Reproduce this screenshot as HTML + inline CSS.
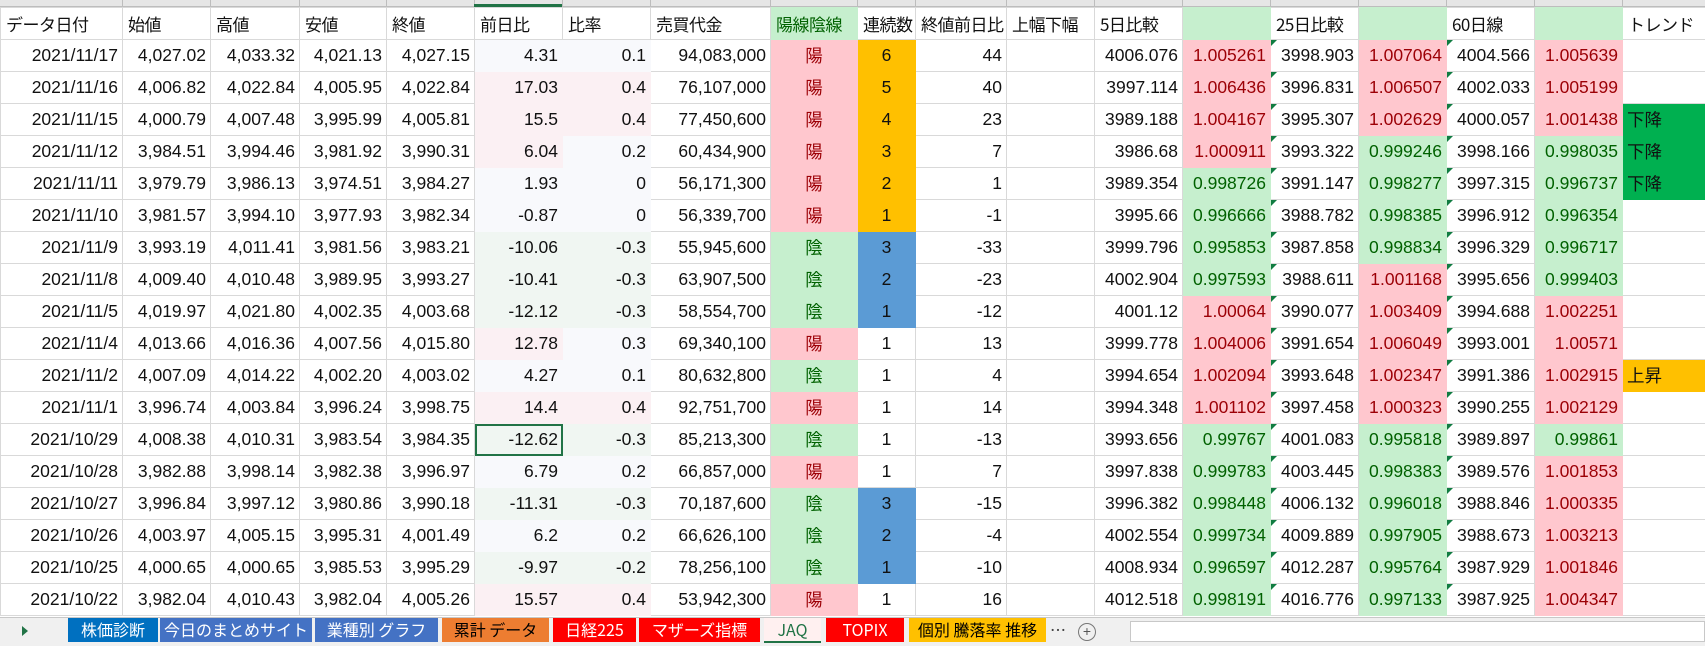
<!DOCTYPE html>
<html><head><meta charset="utf-8">
<style>
body{margin:0;width:1705px;height:645px;overflow:hidden;background:#fff;font-family:"Liberation Sans","Noto Sans CJK JP",sans-serif;position:relative}
.band{position:absolute;left:0;top:0;width:1705px;height:7px;background:#e6e6e6;border-bottom:1px solid #bdbdbd;box-sizing:border-box}
.band i{position:absolute;top:0;width:1px;height:7px;background:#bdbdbd}
table{position:absolute;left:0;top:7px;border-collapse:collapse;table-layout:fixed;width:1705px}
td{height:31px;border:1px solid #d9d9d9;font-size:17.5px;padding:0 4px;text-align:right;white-space:nowrap;overflow:hidden;position:relative;color:#111}
tr.h td{text-align:left;padding-left:5px;font-family:"Noto Sans CJK JP","Liberation Sans",sans-serif;font-size:17px;letter-spacing:-0.5px}
.c{text-align:center}
.p{background:#ffc7ce;color:#9c0006;border-color:#ffc7ce}
.g{background:#c6efce;color:#006100;border-color:#c6efce}
.o{background:#ffc000;text-align:center;border-color:#ffc000}
.b{background:#5b9bd5;text-align:center;border-color:#5b9bd5}
.pp{background:#fbf0f3;border-color:#fbf0f3}
.pg{background:#f0f6f2;border-color:#f0f6f2}
.pw{background:#f8f9fc;border-color:#f8f9fc}
.dn{background:#00b050;text-align:left;font-family:"Noto Sans CJK JP",sans-serif;border-color:#00b050}
.up{background:#ffc000;text-align:left;font-family:"Noto Sans CJK JP",sans-serif;border-color:#ffc000}
.t::before{content:"";position:absolute;left:0;top:0;border-top:6px solid #107c41;border-right:6px solid transparent}
.sel{outline:2px solid #217346;outline-offset:-2px}
.jp{font-family:"Noto Sans CJK JP",sans-serif}
.tabs{position:absolute;left:0;top:617px;width:1705px;height:28px;background:#f0f0f0;border-top:1px solid #c8c8c8}
.tab{position:absolute;top:0;height:24px;font-family:"Noto Sans CJK JP","Liberation Sans",sans-serif;font-size:16px;line-height:23px;text-align:center;color:#fff;overflow:hidden;white-space:nowrap}
</style></head><body>
<div class="band"><i style="left:122px"></i><i style="left:210px"></i><i style="left:299px"></i><i style="left:386px"></i><i style="left:474px"></i><i style="left:562px"></i><i style="left:650px"></i><i style="left:770px"></i><i style="left:857px"></i><i style="left:915px"></i><i style="left:1006px"></i><i style="left:1094px"></i><i style="left:1182px"></i><i style="left:1270px"></i><i style="left:1358px"></i><i style="left:1446px"></i><i style="left:1534px"></i><i style="left:1622px"></i><div style="position:absolute;left:474px;top:4px;width:88px;height:3px;background:#217346"></div></div>
<table>
<colgroup><col style="width:122px"><col style="width:88px"><col style="width:89px"><col style="width:87px"><col style="width:88px"><col style="width:88px"><col style="width:88px"><col style="width:120px"><col style="width:87px"><col style="width:58px"><col style="width:91px"><col style="width:88px"><col style="width:88px"><col style="width:88px"><col style="width:88px"><col style="width:88px"><col style="width:88px"><col style="width:88px"><col style="width:83px"></colgroup>
<tr class="h"><td>データ日付</td><td>始値</td><td>高値</td><td>安値</td><td>終値</td><td>前日比</td><td>比率</td><td>売買代金</td><td class="g">陽線陰線</td><td>連続数</td><td>終値前日比</td><td>上幅下幅</td><td>5日比較</td><td class="g"></td><td>25日比較</td><td class="g"></td><td>60日線</td><td class="g"></td><td>トレンド</td></tr>
<tr><td>2021/11/17</td><td>4,027.02</td><td>4,033.32</td><td>4,021.13</td><td>4,027.15</td><td class="pw">4.31</td><td class="pw">0.1</td><td>94,083,000</td><td class="p c jp">陽</td><td class="o">6</td><td>44</td><td></td><td>4006.076</td><td class="p">1.005261</td><td class="t">3998.903</td><td class="p">1.007064</td><td class="t">4004.566</td><td class="p">1.005639</td><td></td></tr>
<tr><td>2021/11/16</td><td>4,006.82</td><td>4,022.84</td><td>4,005.95</td><td>4,022.84</td><td class="pp">17.03</td><td class="pp">0.4</td><td>76,107,000</td><td class="p c jp">陽</td><td class="o">5</td><td>40</td><td></td><td>3997.114</td><td class="p">1.006436</td><td class="t">3996.831</td><td class="p">1.006507</td><td class="t">4002.033</td><td class="p">1.005199</td><td></td></tr>
<tr><td>2021/11/15</td><td>4,000.79</td><td>4,007.48</td><td>3,995.99</td><td>4,005.81</td><td class="pp">15.5</td><td class="pp">0.4</td><td>77,450,600</td><td class="p c jp">陽</td><td class="o">4</td><td>23</td><td></td><td>3989.188</td><td class="p">1.004167</td><td class="t">3995.307</td><td class="p">1.002629</td><td class="t">4000.057</td><td class="p">1.001438</td><td class="dn">下降</td></tr>
<tr><td>2021/11/12</td><td>3,984.51</td><td>3,994.46</td><td>3,981.92</td><td>3,990.31</td><td class="pp">6.04</td><td class="pw">0.2</td><td>60,434,900</td><td class="p c jp">陽</td><td class="o">3</td><td>7</td><td></td><td>3986.68</td><td class="p">1.000911</td><td class="t">3993.322</td><td class="g">0.999246</td><td class="t">3998.166</td><td class="g">0.998035</td><td class="dn">下降</td></tr>
<tr><td>2021/11/11</td><td>3,979.79</td><td>3,986.13</td><td>3,974.51</td><td>3,984.27</td><td class="pw">1.93</td><td class="pw">0</td><td>56,171,300</td><td class="p c jp">陽</td><td class="o">2</td><td>1</td><td></td><td>3989.354</td><td class="g">0.998726</td><td class="t">3991.147</td><td class="g">0.998277</td><td class="t">3997.315</td><td class="g">0.996737</td><td class="dn">下降</td></tr>
<tr><td>2021/11/10</td><td>3,981.57</td><td>3,994.10</td><td>3,977.93</td><td>3,982.34</td><td class="pw">-0.87</td><td class="pw">0</td><td>56,339,700</td><td class="p c jp">陽</td><td class="o">1</td><td>-1</td><td></td><td>3995.66</td><td class="g">0.996666</td><td class="t">3988.782</td><td class="g">0.998385</td><td class="t">3996.912</td><td class="g">0.996354</td><td></td></tr>
<tr><td>2021/11/9</td><td>3,993.19</td><td>4,011.41</td><td>3,981.56</td><td>3,983.21</td><td class="pg">-10.06</td><td class="pg">-0.3</td><td>55,945,600</td><td class="g c jp">陰</td><td class="b">3</td><td>-33</td><td></td><td>3999.796</td><td class="g">0.995853</td><td class="t">3987.858</td><td class="g">0.998834</td><td class="t">3996.329</td><td class="g">0.996717</td><td></td></tr>
<tr><td>2021/11/8</td><td>4,009.40</td><td>4,010.48</td><td>3,989.95</td><td>3,993.27</td><td class="pg">-10.41</td><td class="pg">-0.3</td><td>63,907,500</td><td class="g c jp">陰</td><td class="b">2</td><td>-23</td><td></td><td>4002.904</td><td class="g">0.997593</td><td class="t">3988.611</td><td class="p">1.001168</td><td class="t">3995.656</td><td class="g">0.999403</td><td></td></tr>
<tr><td>2021/11/5</td><td>4,019.97</td><td>4,021.80</td><td>4,002.35</td><td>4,003.68</td><td class="pg">-12.12</td><td class="pg">-0.3</td><td>58,554,700</td><td class="g c jp">陰</td><td class="b">1</td><td>-12</td><td></td><td>4001.12</td><td class="p">1.00064</td><td class="t">3990.077</td><td class="p">1.003409</td><td class="t">3994.688</td><td class="p">1.002251</td><td></td></tr>
<tr><td>2021/11/4</td><td>4,013.66</td><td>4,016.36</td><td>4,007.56</td><td>4,015.80</td><td class="pp">12.78</td><td class="pw">0.3</td><td>69,340,100</td><td class="p c jp">陽</td><td class="c">1</td><td>13</td><td></td><td>3999.778</td><td class="p">1.004006</td><td class="t">3991.654</td><td class="p">1.006049</td><td class="t">3993.001</td><td class="p">1.00571</td><td></td></tr>
<tr><td>2021/11/2</td><td>4,007.09</td><td>4,014.22</td><td>4,002.20</td><td>4,003.02</td><td class="pw">4.27</td><td class="pw">0.1</td><td>80,632,800</td><td class="g c jp">陰</td><td class="c">1</td><td>4</td><td></td><td>3994.654</td><td class="p">1.002094</td><td class="t">3993.648</td><td class="p">1.002347</td><td class="t">3991.386</td><td class="p">1.002915</td><td class="up">上昇</td></tr>
<tr><td>2021/11/1</td><td>3,996.74</td><td>4,003.84</td><td>3,996.24</td><td>3,998.75</td><td class="pp">14.4</td><td class="pp">0.4</td><td>92,751,700</td><td class="p c jp">陽</td><td class="c">1</td><td>14</td><td></td><td>3994.348</td><td class="p">1.001102</td><td class="t">3997.458</td><td class="p">1.000323</td><td class="t">3990.255</td><td class="p">1.002129</td><td></td></tr>
<tr><td>2021/10/29</td><td>4,008.38</td><td>4,010.31</td><td>3,983.54</td><td>3,984.35</td><td class="pg sel">-12.62</td><td class="pg">-0.3</td><td>85,213,300</td><td class="g c jp">陰</td><td class="c">1</td><td>-13</td><td></td><td>3993.656</td><td class="g">0.99767</td><td class="t">4001.083</td><td class="g">0.995818</td><td class="t">3989.897</td><td class="g">0.99861</td><td></td></tr>
<tr><td>2021/10/28</td><td>3,982.88</td><td>3,998.14</td><td>3,982.38</td><td>3,996.97</td><td class="pw">6.79</td><td class="pw">0.2</td><td>66,857,000</td><td class="p c jp">陽</td><td class="c">1</td><td>7</td><td></td><td>3997.838</td><td class="g">0.999783</td><td class="t">4003.445</td><td class="g">0.998383</td><td class="t">3989.576</td><td class="p">1.001853</td><td></td></tr>
<tr><td>2021/10/27</td><td>3,996.84</td><td>3,997.12</td><td>3,980.86</td><td>3,990.18</td><td class="pg">-11.31</td><td class="pg">-0.3</td><td>70,187,600</td><td class="g c jp">陰</td><td class="b">3</td><td>-15</td><td></td><td>3996.382</td><td class="g">0.998448</td><td class="t">4006.132</td><td class="g">0.996018</td><td class="t">3988.846</td><td class="p">1.000335</td><td></td></tr>
<tr><td>2021/10/26</td><td>4,003.97</td><td>4,005.15</td><td>3,995.31</td><td>4,001.49</td><td class="pw">6.2</td><td class="pw">0.2</td><td>66,626,100</td><td class="g c jp">陰</td><td class="b">2</td><td>-4</td><td></td><td>4002.554</td><td class="g">0.999734</td><td class="t">4009.889</td><td class="g">0.997905</td><td class="t">3988.673</td><td class="p">1.003213</td><td></td></tr>
<tr><td>2021/10/25</td><td>4,000.65</td><td>4,000.65</td><td>3,985.53</td><td>3,995.29</td><td class="pg">-9.97</td><td class="pg">-0.2</td><td>78,256,100</td><td class="g c jp">陰</td><td class="b">1</td><td>-10</td><td></td><td>4008.934</td><td class="g">0.996597</td><td class="t">4012.287</td><td class="g">0.995764</td><td class="t">3987.929</td><td class="p">1.001846</td><td></td></tr>
<tr><td>2021/10/22</td><td>3,982.04</td><td>4,010.43</td><td>3,982.04</td><td>4,005.26</td><td class="pp">15.57</td><td class="pp">0.4</td><td>53,942,300</td><td class="p c jp">陽</td><td class="c">1</td><td>16</td><td></td><td>4012.518</td><td class="g">0.998191</td><td class="t">4016.776</td><td class="g">0.997133</td><td class="t">3987.925</td><td class="p">1.004347</td><td></td></tr>
</table>
<div class="tabs">
<div style="position:absolute;left:22px;top:8px;border-left:6px solid #217346;border-top:5px solid transparent;border-bottom:5px solid transparent"></div>
<div class="tab" style="left:68px;width:90px;background:#0070c0">株価診断</div>
<div class="tab" style="left:160px;width:152px;background:#4472c4">今日のまとめサイト</div>
<div class="tab" style="left:315px;width:123px;background:#4472c4">業種別 グラフ</div>
<div class="tab" style="left:442px;width:107px;background:#ed7d31;color:#000">累計 データ</div>
<div class="tab" style="left:553px;width:83px;background:#ff0000">日経225</div>
<div class="tab" style="left:639px;width:121px;background:#ff0000">マザーズ指標</div>
<div class="tab" style="left:764px;width:57px;background:#fff0f0;color:#217346;border-bottom:2px solid #217346;height:23px">JAQ</div>
<div class="tab" style="left:826px;width:78px;background:#ff0000">TOPIX</div>
<div class="tab" style="left:909px;width:137px;background:#ffc000;color:#000">個別 騰落率 推移</div>
<div class="tab" style="left:1048px;width:20px;color:#444;background:none">…</div>
<div style="position:absolute;left:1078px;top:5px;width:16px;height:16px;border:1px solid #777;border-radius:50%;font-size:14px;line-height:15px;text-align:center;color:#555">+</div>
<div style="position:absolute;left:1130px;top:3px;width:575px;height:21px;background:#fff;border:1px solid #c8c8c8;box-sizing:border-box"></div>
</div>
</body></html>
